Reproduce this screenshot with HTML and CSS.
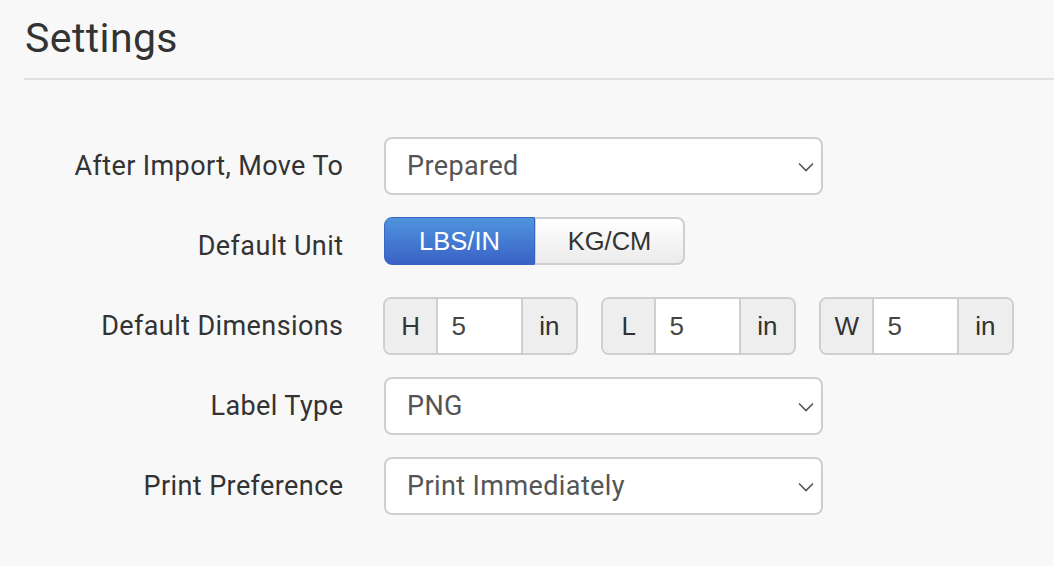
FILE: index.html
```html
<!DOCTYPE html>
<html>
<head>
<meta charset="utf-8">
<link rel="stylesheet" href="styles.css">
</head>
<body>
<div class="page">
  <h1 class="title">Settings</h1>
  <div class="form">
    <div class="row">
      <div class="label">After Import, Move To</div>
      <div class="select"><span>Prepared</span>
        <svg class="chev" width="16" height="10" viewBox="0 0 16 10"><path d="M1 1.5 L8 8.5 L15 1.5" fill="none" stroke="#555" stroke-width="1.6"/></svg>
      </div>
    </div>
    <div class="row">
      <div class="label">Default Unit</div>
      <div class="toggle">
        <div class="tbtn active">LBS/IN</div>
        <div class="tbtn">KG/CM</div>
      </div>
    </div>
    <div class="row">
      <div class="label">Default Dimensions</div>
      <div class="dims">
        <div class="dgroup"><div class="addon">H</div><div class="dinput">5</div><div class="addon unit">in</div></div>
        <div class="dgroup"><div class="addon">L</div><div class="dinput">5</div><div class="addon unit">in</div></div>
        <div class="dgroup"><div class="addon">W</div><div class="dinput">5</div><div class="addon unit">in</div></div>
      </div>
    </div>
    <div class="row">
      <div class="label">Label Type</div>
      <div class="select"><span>PNG</span>
        <svg class="chev" width="16" height="10" viewBox="0 0 16 10"><path d="M1 1.5 L8 8.5 L15 1.5" fill="none" stroke="#555" stroke-width="1.6"/></svg>
      </div>
    </div>
    <div class="row">
      <div class="label">Print Preference</div>
      <div class="select"><span>Print Immediately</span>
        <svg class="chev" width="16" height="10" viewBox="0 0 16 10"><path d="M1 1.5 L8 8.5 L15 1.5" fill="none" stroke="#555" stroke-width="1.6"/></svg>
      </div>
    </div>
  </div>
</div>
</body>
</html>
```
FILE: styles.css
```css
html, body {
  margin: 0;
  padding: 0;
  background: #f8f8f8;
  font-family: Roboto, "Liberation Sans", sans-serif;
  color: #333;
}
.page {
  padding-left: 24px;
  height: 566px;
  overflow: hidden;
}
.title {
  margin: 0;
  padding: 14px 0 0 1px;
  font-size: 41px;
  letter-spacing: 0.4px;
  line-height: 48px;
  font-weight: 400;
  color: #333;
  border-bottom: 2px solid #e2e2e2;
  padding-bottom: 16px;
}
.form {
  padding-top: 57px;
  display: flex;
  flex-direction: column;
  gap: 22px;
}
.row {
  display: grid;
  grid-template-columns: 319px auto;
  column-gap: 41px;
  height: 58px;
  align-items: center;
}
.label {
  text-align: right;
  font-size: 27px;
  letter-spacing: 0.4px;
  color: #333;
  margin-right: -0.4px;
}
.select {
  box-sizing: border-box;
  width: 439px;
  height: 58px;
  border: 2px solid #cfcfcf;
  border-radius: 8px;
  background: #fff;
  display: flex;
  align-items: center;
  justify-content: space-between;
  padding: 0 7px 0 21px;
  font-size: 27px;
  letter-spacing: 0.4px;
  color: #555;
}
.chev {
  display: block;
  margin-top: 1px;
}
.toggle {
  display: flex;
  align-self: start;
  height: 48px;
}
.tbtn {
  box-sizing: border-box;
  height: 48px;
  display: flex;
  align-items: center;
  justify-content: center;
  font-family: "Liberation Sans", Arial, sans-serif;
  font-size: 25.5px;
}
.tbtn.active {
  width: 151px;
  color: #fff;
  background: linear-gradient(#4f94dc, #3a62c6);
  border: 1px solid #3a66c4;
  border-radius: 8px 0 0 8px;
}
.tbtn:not(.active) {
  width: 150px;
  color: #333;
  background: linear-gradient(#ffffff, #ebebeb);
  border: 2px solid #cfcfcf;
  border-left: 1px solid #cfcfcf;
  border-radius: 0 8px 8px 0;
}
.dims {
  display: flex;
  gap: 23px;
  margin-left: -1px;
}
.dgroup {
  box-sizing: border-box;
  display: flex;
  width: 195px;
  height: 58px;
  border: 2px solid #cfcfcf;
  border-radius: 8px;
  overflow: hidden;
  font-family: "Liberation Sans", Arial, sans-serif;
  font-size: 26px;
  color: #333;
}
.addon {
  width: 52px;
  background: #eeeeee;
  display: flex;
  align-items: center;
  justify-content: center;
}
.addon.unit {
  width: 54px;
  border-left: 2px solid #cfcfcf;
}
.dinput {
  width: 85px;
  background: #fff;
  border-left: 2px solid #cfcfcf;
  display: flex;
  align-items: center;
  padding-left: 13px;
  box-sizing: border-box;
  color: #444;
}
```
